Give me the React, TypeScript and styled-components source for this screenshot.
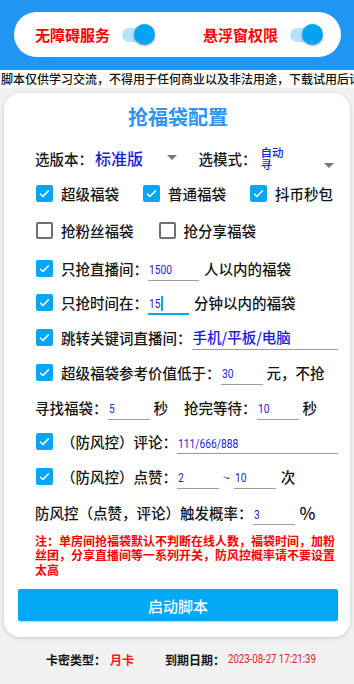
import React from "react";
import styled, { createGlobalStyle } from "styled-components";

const GlobalStyle = createGlobalStyle`
  body {
    margin: 0;
    background: #f1f1f1;
    font-family: "Noto Sans CJK SC", "Noto Sans", sans-serif;
    color: #151515;
  }
`;

const Page = styled.div`
  width: 354px;
  height: 684px;
  overflow: hidden;
  display: flex;
  flex-direction: column;
`;

const Header = styled.div`
  height: 70px;
  box-sizing: border-box;
  padding: 12px 13px 13px 14px;
  background: #2196f3;
`;

const Pill = styled.div`
  height: 45px;
  border-radius: 23px;
  background: #fff;
  display: flex;
  align-items: center;
  justify-content: space-between;
  padding: 0 19px 0 21px;
`;

const PermGroup = styled.div`
  display: flex;
  align-items: center;
  gap: 12px;
`;

const PermLabel = styled.span`
  color: #ff0000;
  font-size: 15px;
  font-weight: bold;
`;

const Switch = styled.span`
  position: relative;
  width: 32px;
  height: 14px;
  border-radius: 7px;
  background: #b6e2fb;
  margin-top: 1px;
`;

const Thumb = styled.span`
  position: absolute;
  right: -1px;
  top: -4px;
  width: 21px;
  height: 21px;
  border-radius: 50%;
  background: #03a4ef;
  box-shadow: 0 1px 3px rgba(0, 0, 0, 0.3);
`;

const Notice = styled.div`
  height: 18px;
  line-height: 18px;
  background: #fff;
  font-size: 12px;
  font-weight: 500;
  white-space: nowrap;
  overflow: hidden;
  padding-left: 1px;
  color: #111;
`;

const Card = styled.div`
  margin: 5px 4px 0;
  background: #fff;
  border-radius: 16px;
  box-shadow: 0 1px 4px rgba(0, 0, 0, 0.16);
  padding: 0 12px 16px 14px;
`;

const Title = styled.div`
  height: 48px;
  line-height: 48px;
  text-align: center;
  font-size: 20px;
  font-weight: bold;
  color: #2f95f0;
`;

const Row = styled.div<{ $h?: number; $mt?: number; $gap?: number }>`
  display: flex;
  align-items: center;
  height: ${({ $h }) => $h ?? 35}px;
  margin-top: ${({ $mt }) => $mt ?? 0}px;
  padding-left: 17px;
  gap: ${({ $gap }) => $gap ?? 0}px;
`;

const Label = styled.span`
  font-size: 14.5px;
  font-weight: 500;
  white-space: nowrap;
`;

const CheckItem = styled.div`
  display: flex;
  align-items: center;
`;

const Box = styled.span<{ $on: boolean }>`
  width: 17px;
  height: 17px;
  box-sizing: border-box;
  margin-left: 1px;
  margin-right: 8px;
  border-radius: 2px;
  flex: none;
  display: flex;
  align-items: center;
  justify-content: center;
  background: ${({ $on }) => ($on ? "#0aa6f2" : "#fff")};
  border: ${({ $on }) => ($on ? "none" : "2px solid #6f6f6f")};
`;

const Check = ({ on }: { on: boolean }) => (
  <Box $on={on}>
    {on && (
      <svg width="13" height="13" viewBox="0 0 24 24">
        <path d="M4 12.5l5 5L20 6.5" fill="none" stroke="#fff" strokeWidth="2.8" />
      </svg>
    )}
  </Box>
);

const Field = styled.span<{ $w?: number; $focus?: boolean }>`
  display: flex;
  align-items: center;
  box-sizing: border-box;
  height: 22px;
  margin-top: 3px;
  padding-left: 1px;
  ${({ $w }) => ($w ? `width: ${$w}px; flex: none;` : "flex: 1;")}
  border-bottom: ${({ $focus }) =>
    $focus ? "2px solid #03a9f4" : "1px solid #9c9c9c"};
  color: #2626d4;
`;

/* numbers in the reference use a condensed face; squeeze Roboto */
const Num = styled.span`
  display: inline-block;
  font-family: "Roboto", sans-serif;
  font-size: 13.5px;
  transform: scaleX(0.76);
  transform-origin: left center;
  white-space: nowrap;
`;

const WideValue = styled.span`
  font-size: 14.5px;
  color: #1a1ad4;
  font-weight: 500;
  margin-top: -3px;
`;

const Caret = styled.span`
  width: 1.5px;
  height: 15px;
  margin-left: -3px;
  background: #03a9f4;
`;

const Unit = styled.span<{ $ml?: number; $mr?: number; $size?: number }>`
  font-size: ${({ $size }) => $size ?? 14.5}px;
  font-weight: 500;
  margin-left: ${({ $ml }) => $ml ?? 4}px;
  margin-right: ${({ $mr }) => $mr ?? 0}px;
  white-space: nowrap;
`;

const Spinner = styled.div<{ $w: number; $ml?: number }>`
  display: flex;
  align-items: center;
  width: ${({ $w }) => $w}px;
  margin-left: ${({ $ml }) => $ml ?? 0}px;
`;

const SpinValue = styled.span<{ $small?: boolean }>`
  flex: 1;
  color: #1c1cd4;
  margin-left: 2px;
  font-size: ${({ $small }) => ($small ? "11.5px" : "16px")};
  font-weight: 500;
  line-height: ${({ $small }) => ($small ? "12.5px" : "20px")};
  ${({ $small }) => ($small ? "max-width: 24px; padding-left: 2px;" : "")}
`;

const Arrow = styled.span<{ $mt?: number }>`
  width: 0;
  height: 0;
  border-left: 5px solid transparent;
  border-right: 5px solid transparent;
  border-top: 5px solid #777;
  margin-top: ${({ $mt }) => $mt ?? 0}px;
  margin-right: 4px;
  margin-left: auto;
`;

const Note = styled.div`
  margin-top: 3px;
  padding-left: 17px;
  font-size: 12px;
  line-height: 14.5px;
  font-weight: bold;
  color: #ff0000;
`;

const StartButton = styled.button`
  display: block;
  width: 100%;
  height: 32px;
  margin-top: 12px;
  border: none;
  border-radius: 2px;
  background: #03a9f4;
  color: #fff;
  font-family: "Noto Sans CJK SC", sans-serif;
  font-size: 15px;
  font-weight: 500;
  box-shadow: 0 1px 2px rgba(0, 0, 0, 0.2);
`;

const Footer = styled.div`
  height: 44px;
  display: flex;
  align-items: center;
  padding-left: 46px;
  font-size: 12px;
  font-weight: bold;
`;

const FootValue = styled.span<{ $ml: number; $mr?: number }>`
  color: #f01c1c;
  margin-left: ${({ $ml }) => $ml}px;
  margin-right: ${({ $mr }) => $mr ?? 0}px;
`;

const FootDate = styled(Num)`
  color: #e02020;
  font-size: 12px;
  font-weight: normal;
  margin-left: 3px;
  transform: scaleX(0.8);
`;

export default function App() {
  return (
    <Page>
      <GlobalStyle />
      <Header>
        <Pill>
          <PermGroup>
            <PermLabel>无障碍服务</PermLabel>
            <Switch>
              <Thumb />
            </Switch>
          </PermGroup>
          <PermGroup>
            <PermLabel>悬浮窗权限</PermLabel>
            <Switch>
              <Thumb />
            </Switch>
          </PermGroup>
        </Pill>
      </Header>
      <Notice>
        脚本仅供学习交流，不得用于任何商业以及非法用途，下载试用后请于24小时内删除
      </Notice>
      <Card>
        <Title>抢福袋配置</Title>
        <Row $mt={-0.5}>
          <Spinner $w={149}>
            <Label>选版本：</Label>
            <SpinValue>标准版</SpinValue>
            <Arrow $mt={-2} />
          </Spinner>
          <Spinner $w={142} $ml={17}>
            <Label>选模式：</Label>
            <SpinValue $small>自动寻</SpinValue>
            <Arrow $mt={14} />
          </Spinner>
        </Row>
        <Row $gap={23}>
          <CheckItem>
            <Check on />
            <Label>超级福袋</Label>
          </CheckItem>
          <CheckItem>
            <Check on />
            <Label>普通福袋</Label>
          </CheckItem>
          <CheckItem>
            <Check on />
            <Label>抖币秒包</Label>
          </CheckItem>
        </Row>
        <Row $gap={24} $mt={2}>
          <CheckItem>
            <Check on={false} />
            <Label>抢粉丝福袋</Label>
          </CheckItem>
          <CheckItem>
            <Check on={false} />
            <Label>抢分享福袋</Label>
          </CheckItem>
        </Row>
        <Row $mt={3}>
          <Check on />
          <Label>只抢直播间：</Label>
          <Field $w={51}>
            <Num>1500</Num>
          </Field>
          <Unit $ml={5}>人以内的福袋</Unit>
        </Row>
        <Row $h={34}>
          <Check on />
          <Label>只抢时间在：</Label>
          <Field $w={41} $focus>
            <Num>15</Num>
            <Caret />
          </Field>
          <Unit $ml={5}>分钟以内的福袋</Unit>
        </Row>
        <Row>
          <Check on />
          <Label>跳转关键词直播间：</Label>
          <Field>
            <WideValue>手机/平板/电脑</WideValue>
          </Field>
        </Row>
        <Row>
          <Check on />
          <Label>超级福袋参考价值低于：</Label>
          <Field $w={42}>
            <Num>30</Num>
          </Field>
          <Unit>元，不抢</Unit>
        </Row>
        <Row>
          <Label>寻找福袋：</Label>
          <Field $w={42}>
            <Num>5</Num>
          </Field>
          <Unit $mr={16}>秒</Unit>
          <Label>抢完等待：</Label>
          <Field $w={42}>
            <Num>10</Num>
          </Field>
          <Unit>秒</Unit>
        </Row>
        <Row $h={34}>
          <Check on />
          <Label>（防风控）评论：</Label>
          <Field>
            <Num>111/666/888</Num>
          </Field>
        </Row>
        <Row>
          <Check on />
          <Label>（防风控）点赞：</Label>
          <Field $w={42}>
            <Num>2</Num>
          </Field>
          <Unit $ml={4} $mr={4} $size={12}>
            ~
          </Unit>
          <Field $w={42}>
            <Num>10</Num>
          </Field>
          <Unit $ml={5}>次</Unit>
        </Row>
        <Row $h={36} $mt={1}>
          <Label>防风控（点赞，评论）触发概率：</Label>
          <Field $w={42}>
            <Num>3</Num>
          </Field>
          <Unit $ml={5} $size={17}>
            %
          </Unit>
        </Row>
        <Note>
          注：单房间抢福袋默认不判断在线人数，福袋时间，加粉丝团，分享直播间等一系列开关，防风控概率请不要设置太高
        </Note>
        <StartButton>启动脚本</StartButton>
      </Card>
      <Footer>
        <span>卡密类型：</span>
        <FootValue $ml={4} $mr={31}>
          月卡
        </FootValue>
        <span>到期日期：</span>
        <FootDate>2023-08-27 17:21:39</FootDate>
      </Footer>
    </Page>
  );
}
